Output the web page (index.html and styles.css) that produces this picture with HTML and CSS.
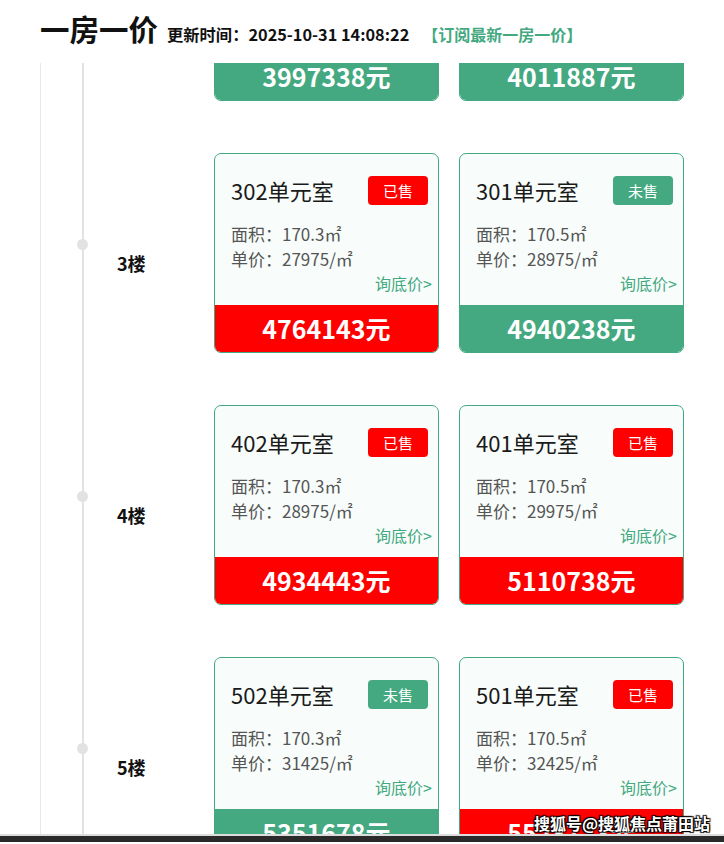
FILE: index.html
```html
<!DOCTYPE html>
<html lang="zh-CN">

<head>
    <meta charset="UTF-8">
    <meta name="viewport" content="width=device-width, initial-scale=1.0">
    <title>一房一价</title>
    <link rel="stylesheet" href="styles.css">
</head>

<body>
    <div class="header">
        <h1>一房一价</h1>
        <span class="update-time">更新时间：2025-10-31 14:08:22</span>
        <a class="subscribe" href="#">【订阅最新一房一价】</a>
    </div>

    <div class="viewport">
        <div class="timeline">
            <div class="track">
                <div class="floor first">
                    <div class="floor-label">2楼</div>
                    <div class="rooms">
                        <div class="room">
                            <div class="room-head">
                                <span class="room-name">202单元室</span>
                                <span class="tag unsold">未售</span>
                            </div>
                            <div class="room-info">面积：170.3㎡</div>
                            <div class="room-info">单价：23475/㎡</div>
                            <div class="ask">询底价&gt;</div>
                            <div class="price unsold">3997338元</div>
                        </div>
                        <div class="room">
                            <div class="room-head">
                                <span class="room-name">201单元室</span>
                                <span class="tag unsold">未售</span>
                            </div>
                            <div class="room-info">面积：170.5㎡</div>
                            <div class="room-info">单价：23530/㎡</div>
                            <div class="ask">询底价&gt;</div>
                            <div class="price unsold">4011887元</div>
                        </div>
                    </div>
                </div>

                <div class="floor">
                    <div class="floor-label">3楼</div>
                    <div class="rooms">
                        <div class="room">
                            <div class="room-head">
                                <span class="room-name">302单元室</span>
                                <span class="tag sold">已售</span>
                            </div>
                            <div class="room-info">面积：170.3㎡</div>
                            <div class="room-info">单价：27975/㎡</div>
                            <div class="ask">询底价&gt;</div>
                            <div class="price sold">4764143元</div>
                        </div>
                        <div class="room">
                            <div class="room-head">
                                <span class="room-name">301单元室</span>
                                <span class="tag unsold">未售</span>
                            </div>
                            <div class="room-info">面积：170.5㎡</div>
                            <div class="room-info">单价：28975/㎡</div>
                            <div class="ask">询底价&gt;</div>
                            <div class="price unsold">4940238元</div>
                        </div>
                    </div>
                </div>

                <div class="floor">
                    <div class="floor-label">4楼</div>
                    <div class="rooms">
                        <div class="room">
                            <div class="room-head">
                                <span class="room-name">402单元室</span>
                                <span class="tag sold">已售</span>
                            </div>
                            <div class="room-info">面积：170.3㎡</div>
                            <div class="room-info">单价：28975/㎡</div>
                            <div class="ask">询底价&gt;</div>
                            <div class="price sold">4934443元</div>
                        </div>
                        <div class="room">
                            <div class="room-head">
                                <span class="room-name">401单元室</span>
                                <span class="tag sold">已售</span>
                            </div>
                            <div class="room-info">面积：170.5㎡</div>
                            <div class="room-info">单价：29975/㎡</div>
                            <div class="ask">询底价&gt;</div>
                            <div class="price sold">5110738元</div>
                        </div>
                    </div>
                </div>

                <div class="floor">
                    <div class="floor-label">5楼</div>
                    <div class="rooms">
                        <div class="room">
                            <div class="room-head">
                                <span class="room-name">502单元室</span>
                                <span class="tag unsold">未售</span>
                            </div>
                            <div class="room-info">面积：170.3㎡</div>
                            <div class="room-info">单价：31425/㎡</div>
                            <div class="ask">询底价&gt;</div>
                            <div class="price unsold">5351678元</div>
                        </div>
                        <div class="room">
                            <div class="room-head">
                                <span class="room-name">501单元室</span>
                                <span class="tag sold">已售</span>
                            </div>
                            <div class="room-info">面积：170.5㎡</div>
                            <div class="room-info">单价：32425/㎡</div>
                            <div class="ask">询底价&gt;</div>
                            <div class="price sold">5528713元</div>
                        </div>
                    </div>
                </div>
            </div>
        </div>

        <div class="watermark">搜狐号@搜狐焦点莆田站</div>
    </div>

    <div class="bottom-bar"></div>
</body>

</html>
```

FILE: styles.css
```css
* {
    margin: 0;
    padding: 0;
    box-sizing: border-box;
}

body {
    font-family: "Noto Sans CJK SC", "Noto Sans", sans-serif;
    background: #fff;
    color: #111;
    height: 844px;
    overflow: hidden;
}

.header {
    height: 63px;
    display: flex;
    align-items: baseline;
    padding: 8px 0 0 40px;
    background: #fff;
}

.header h1 {
    font-size: 29.5px;
    font-weight: bold;
    line-height: 40px;
    margin-right: 9px;
}

.update-time {
    font-size: 16.3px;
    font-weight: bold;
}

.subscribe {
    font-size: 16px;
    font-weight: bold;
    color: #44a980;
    text-decoration: none;
    margin-left: 13px;
}

.viewport {
    position: relative;
    height: 773px;
    overflow: hidden;
    border-bottom: 2px solid #dcdcdc;
}

.timeline {
    margin-left: 40px;
    border-left: 1px solid #e8e8e8;
    height: 100%;
}

.track {
    display: flex;
    flex-direction: column;
    margin-left: 41px;
    border-left: 2px solid #e2e2e2;
    height: 100%;
}

.floor {
    display: flex;
    flex-shrink: 0;
    height: 252px;
}

.floor.first {
    margin-top: -162px;
}

.floor-label {
    position: relative;
    width: 130px;
    padding: 98px 0 0 33px;
    font-size: 18px;
    font-weight: bold;
    line-height: 24px;
}

.floor-label::before {
    content: "";
    position: absolute;
    left: -7px;
    top: 86px;
    width: 11px;
    height: 11px;
    border-radius: 50%;
    background: #e2e2e2;
}

.rooms {
    display: flex;
    gap: 20px;
}

.room {
    width: 225px;
    height: 200px;
    border: 1px solid #44a980;
    border-radius: 7px;
    background: #f8fdfb;
    overflow: hidden;
    display: flex;
    flex-direction: column;
}

.room-head {
    display: flex;
    justify-content: space-between;
    align-items: center;
    padding: 21px 10px 0 16px;
    height: 51px;
    margin-bottom: 16px;
}

.room-name {
    font-size: 22px;
    color: #1a1a1a;
}

.tag {
    width: 60px;
    height: 29px;
    border-radius: 4px;
    color: #fff;
    font-size: 15px;
    line-height: 29px;
    text-align: center;
}

.tag.sold {
    background: #ff0000;
}

.tag.unsold {
    background: #44a980;
}

.room-info {
    font-size: 17px;
    line-height: 25px;
    color: #555;
    padding-left: 16px;
}

.ask {
    font-size: 16px;
    line-height: 25px;
    color: #44a980;
    text-align: right;
    padding-right: 6px;
}

.price {
    margin-top: auto;
    height: 47px;
    line-height: 47px;
    text-align: center;
    color: #fff;
    font-size: 25px;
    font-weight: bold;
}

.price.sold {
    background: #ff0000;
}

.price.unsold {
    background: #44a980;
}

.watermark {
    position: absolute;
    right: 14px;
    bottom: 0;
    font-size: 16px;
    font-weight: bold;
    color: #fff;
    line-height: 22px;
    text-shadow: 1px 1px 1px #000, -1px -1px 1px #000, 1px -1px 1px #000, -1px 1px 1px #000;
}

.bottom-bar {
    height: 6px;
    background: #2a2a2a;
}
```
